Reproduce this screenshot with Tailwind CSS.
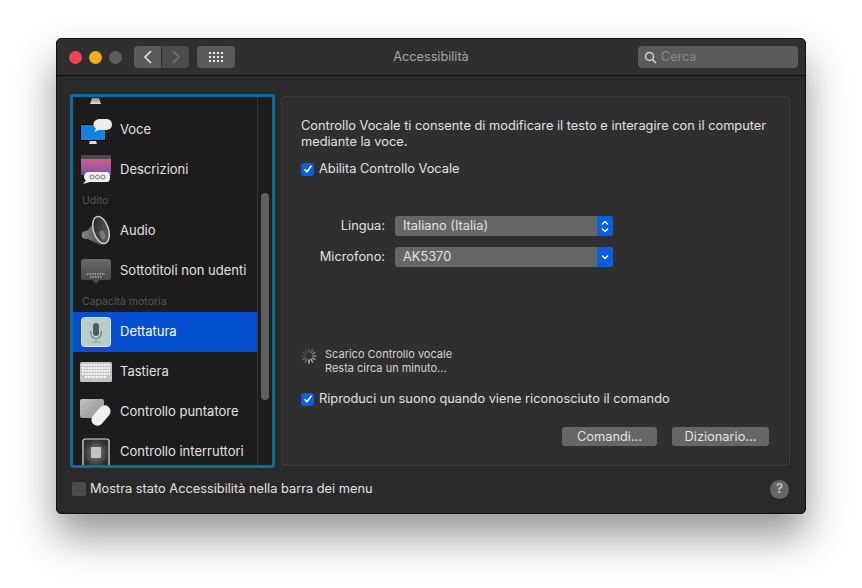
<!DOCTYPE html>
<html lang="it">
<head>
<meta charset="utf-8">
<title>Accessibilità</title>
<script src="https://cdn.jsdelivr.net/npm/@tailwindcss/browser@4"></script>
</head>
<body class="bg-white overflow-hidden font-['Inter','Liberation_Sans',sans-serif] text-[12.8px] text-[#e2e2e2]">
<div class="w-[862px] h-[588px] pt-[38px] pl-[56px]">
  <div class="w-[750px] h-[476px] rounded-[5px] bg-[#2a2a2a] border border-[#111] shadow-[0_22px_40px_rgba(0,0,0,0.42)] flex flex-col overflow-hidden">
    <!-- title bar -->
    <div class="h-[37px] shrink-0 bg-[#2f2f2f] border-b border-[#0c0c0c] flex items-center pl-[12px] pr-[7px]">
      <div class="flex items-center gap-[7px]">
        <span class="w-[13px] h-[13px] rounded-full bg-[#f5404f]"></span>
        <span class="w-[13px] h-[13px] rounded-full bg-[#f7ab1e]"></span>
        <span class="w-[13px] h-[13px] rounded-full bg-[#5e5e5e]"></span>
      </div>
      <div class="flex items-center gap-px ml-[12px]">
        <div class="w-[27px] h-[22px] rounded-l-[4px] bg-[#5b5b5b] flex items-center justify-center">
          <svg width="10" height="14" viewBox="0 0 10 14" fill="none" stroke="#eee" stroke-width="1.5"><path d="M8 1L2 7l6 6"/></svg>
        </div>
        <div class="w-[27px] h-[22px] rounded-r-[4px] bg-[#4c4c4c] flex items-center justify-center">
          <svg width="10" height="14" viewBox="0 0 10 14" fill="none" stroke="#737373" stroke-width="1.5"><path d="M2 1l6 6-6 6"/></svg>
        </div>
      </div>
      <div class="w-[38px] h-[22px] ml-[8px] rounded-[4px] bg-[#5b5b5b] flex items-center justify-center">
        <svg width="14" height="11" viewBox="0 0 14 11" fill="#f0f0f0">
          <rect x="0" y="0" width="2" height="2"/><rect x="4" y="0" width="2" height="2"/><rect x="8" y="0" width="2" height="2"/><rect x="12" y="0" width="2" height="2"/>
          <rect x="0" y="4" width="2" height="2"/><rect x="4" y="4" width="2" height="2"/><rect x="8" y="4" width="2" height="2"/><rect x="12" y="4" width="2" height="2"/>
          <rect x="0" y="8" width="2" height="2"/><rect x="4" y="8" width="2" height="2"/><rect x="8" y="8" width="2" height="2"/><rect x="12" y="8" width="2" height="2"/>
        </svg>
      </div>
      <div class="flex-1 text-center pr-[11px] text-[#a8a8a8] text-[12.7px]">Accessibilità</div>
      <div class="w-[160px] h-[22px] rounded-[4px] bg-[#5a5a5a] flex items-center pl-[6px] gap-[4px]">
        <svg width="13" height="13" viewBox="0 0 13 13" fill="none" stroke="#d8d8d8" stroke-width="1.5"><circle cx="5.5" cy="5.5" r="4"/><path d="M8.5 8.5l3.5 3.5"/></svg>
        <span class="text-[#8a8a8a] text-[12.5px]">Cerca</span>
      </div>
    </div>

    <!-- body -->
    <div class="flex-1 flex flex-col pl-[13px] pr-[15px] pt-[18px]">
      <div class="flex gap-[6px] items-start">
        <!-- sidebar -->
        <div class="w-[205px] h-[374px] shrink-0 rounded-[3px] border-[3px] border-[#0b6c9f] bg-[#1c1c1c] flex overflow-hidden text-[13px]">
          <div class="w-[184px] shrink-0 overflow-hidden">
            <div class="-mt-[27px]">
              <div class="h-[40px] flex items-center pl-[7px] gap-[9px]">
                <svg width="32" height="32" viewBox="0 0 32 32">
                  <defs><linearGradient id="st" x1="0" y1="0" x2="0" y2="1"><stop offset="0" stop-color="#8a8a8a"/><stop offset="1" stop-color="#e0e0e0"/></linearGradient></defs>
                  <path d="M12 24h7l2 6H10z" fill="url(#st)"/>
                </svg>
              </div>
              <div class="h-[40px] flex items-center pl-[7px] gap-[8px]">
                <svg width="32" height="32" viewBox="0 0 32 32">
                  <rect x="0.500" y="10.500" width="25" height="16" fill="#0d84e4" stroke="#050505"/>
                  <path d="M10 27h6l1 3H9z" fill="#e0e0e0"/>
                  <path d="M20 5h6c3.500 0 6 2.200 6 5.500S29.500 16 26 16h-7l-5 2 2-3.500c-1.500-1-2.500-2.300-2.500-4C13.500 7.200 16.500 5 20 5z" fill="#ececec"/>
                </svg>
                <span>Voce</span>
              </div>
              <div class="h-[40px] flex items-center pl-[7px] gap-[8px]">
                <svg width="32" height="32" viewBox="0 0 32 32">
                  <defs><linearGradient id="g1" x1="0" y1="0" x2="0" y2="1"><stop offset="0" stop-color="#c9608a"/><stop offset="0.550" stop-color="#a85a9a"/><stop offset="1" stop-color="#5d55a8"/></linearGradient></defs>
                  <rect x="1" y="1" width="30" height="4" fill="#4a4a4a"/>
                  <rect x="1" y="5" width="30" height="16" fill="url(#g1)"/>
                  <path d="M8 18h19c2 0 3 2 3 5s-1 5-3 5H10l-7 2 3-3.500c-1-1-2-2-2-3.500 0-3 2-5 4-5z" fill="#f0f0f0"/>
                  <circle cx="12" cy="23" r="2" fill="none" stroke="#777"/><circle cx="17.500" cy="23" r="2" fill="none" stroke="#777"/><circle cx="23" cy="23" r="2" fill="none" stroke="#777"/>
                </svg>
                <span>Descrizioni</span>
              </div>
              <div class="h-[21px] flex items-center pl-[9px] text-[10.5px] text-[#555]">Udito</div>
              <div class="h-[40px] flex items-center pl-[7px] gap-[8px]">
                <svg width="32" height="32" viewBox="0 0 32 32">
                  <defs>
                    <linearGradient id="sp" x1="0" y1="0" x2="1" y2="1"><stop offset="0" stop-color="#1f1f1f"/><stop offset="1" stop-color="#6a6a6a"/></linearGradient>
                    <linearGradient id="bk" x1="0" y1="0" x2="1" y2="0"><stop offset="0" stop-color="#8a8a8a"/><stop offset="1" stop-color="#383838"/></linearGradient>
                  </defs>
                  <path d="M3 17c1-1 4-1 5-2L19 2l8 26-7 2L8 24c-2 0-5 0-6-2-1-2 0-4 1-5z" fill="url(#bk)"/>
                  <ellipse cx="21" cy="15" rx="7.500" ry="14" fill="url(#sp)" stroke="#d0d0d0" stroke-width="1.500" transform="rotate(-17 21 15)"/>
                  <ellipse cx="22.500" cy="20" rx="2.500" ry="4.500" fill="#7a7a7a" transform="rotate(-17 22.500 20)"/>
                </svg>
                <span>Audio</span>
              </div>
              <div class="h-[40px] flex items-center pl-[7px] gap-[8px]">
                <svg width="32" height="32" viewBox="0 0 32 32">
                  <defs><linearGradient id="cc" x1="0" y1="0" x2="0" y2="1"><stop offset="0" stop-color="#6a6a6a"/><stop offset="1" stop-color="#444"/></linearGradient></defs>
                  <path d="M4 4h24c1.500 0 3 1 3 3v16c0 1-1 2-2 2H20l-4 4-4-4H3c-1 0-2-1-2-2V7c0-2 1.500-3 3-3z" fill="url(#cc)"/>
                  <path d="M7 19h18M10 22h12" stroke="#dcdcdc" stroke-dasharray="1.500 1"/>
                </svg>
                <span>Sottotitoli non udenti</span>
              </div>
              <div class="h-[21px] flex items-center pl-[9px] text-[10.5px] text-[#555]">Capacità motoria</div>
              <div class="h-[40px] flex items-center pl-[7px] gap-[8px] bg-[#0450d0] text-white">
                <svg width="32" height="32" viewBox="0 0 32 32">
                  <rect x="1.500" y="1.500" width="29" height="29" rx="3" fill="#b9cdc9" stroke="#dde6e4"/>
                  <rect x="13" y="7" width="6" height="13" rx="3" fill="#4c5d61"/>
                  <path d="M10.500 15c0 5 2 7.500 5.500 7.500s5.500-2.500 5.500-7.500" fill="none" stroke="#6f8084" stroke-width="1.200"/>
                  <path d="M16 22v4M12 26h8" stroke="#73b98a" stroke-width="1.200"/>
                </svg>
                <span>Dettatura</span>
              </div>
              <div class="h-[40px] flex items-center pl-[7px] gap-[8px]">
                <svg width="32" height="32" viewBox="0 0 32 32">
                  <rect x="0" y="6" width="32" height="20" rx="1.500" fill="#c4c4c4"/>
                  <path d="M2 9h28M2 12h28M2 15h28M2 18h28M5 21h22" stroke="#f6f6f6" stroke-width="1.800" stroke-dasharray="2 .7"/>
                </svg>
                <span>Tastiera</span>
              </div>
              <div class="h-[40px] flex items-center pl-[7px] gap-[8px]">
                <svg width="32" height="32" viewBox="0 0 32 32">
                  <defs><linearGradient id="tp" x1="0" y1="0" x2="1" y2="1"><stop offset="0" stop-color="#c0c0c0"/><stop offset="1" stop-color="#8f8f8f"/></linearGradient></defs>
                  <rect x="0" y="3" width="24" height="19" rx="2" fill="url(#tp)"/>
                  <rect x="15" y="8" width="12" height="23" rx="6" transform="rotate(40 21 19.500)" fill="#f0f0f0"/>
                </svg>
                <span>Controllo puntatore</span>
              </div>
              <div class="h-[40px] flex items-center pl-[7px] gap-[8px]">
                <svg width="32" height="32" viewBox="0 0 32 32">
                  <defs><radialGradient id="sw"><stop offset="0.300" stop-color="#6a6a6a"/><stop offset="1" stop-color="#2d2d2d"/></radialGradient></defs>
                  <rect x="3" y="3" width="26" height="28" rx="2" fill="url(#sw)" stroke="#e4e4e4" stroke-width="1.200"/>
                  <rect x="11" y="11" width="10" height="11" rx="1" fill="#c4c4c4"/>
                </svg>
                <span>Controllo interruttori</span>
              </div>
            </div>
          </div>
          <div class="flex-1 border-l border-[#333] pl-[3px] pt-[96px]">
            <div class="w-[8px] h-[207px] rounded-full bg-[#5f5f5f]"></div>
          </div>
        </div>

        <!-- panel -->
        <div class="w-[509px] h-[370px] mt-[2px] rounded-[4px] bg-[#2f2f2f] border border-[#3a3a3a] flex flex-col pl-[19px] pr-[20px] pt-[21px]">
          <p class="leading-[16px]">Controllo Vocale ti consente di modificare il testo e interagire con il computer<br>mediante la voce.</p>
          <label class="flex items-center gap-[5px] mt-[11px] h-[16px]">
            <span class="w-[13px] h-[13px] rounded-[3px] bg-[#0a5fe0] flex items-center justify-center">
              <svg width="10" height="10" viewBox="0 0 10 10" fill="none" stroke="#fff" stroke-width="1.600"><path d="M1.500 5.200l2.400 2.600 4.600-6"/></svg>
            </span>
            <span>Abilita Controllo Vocale</span>
          </label>
          <div class="grid grid-cols-[93px_218px] gap-x-[10px] gap-y-[11px] items-center mt-[39px] -ml-[9px] w-fit">
            <span class="text-right">Lingua:</span>
            <div class="h-[20px] rounded-[3px] bg-[#666] flex items-center pl-[8px] overflow-hidden">
              <span class="flex-1">Italiano (Italia)</span>
              <span class="w-[16px] h-full bg-[#0a5fe0] flex items-center justify-center">
                <svg width="8" height="13" viewBox="0 0 8 13" fill="none" stroke="#fff" stroke-width="1.300"><path d="M1 4.500l3-3 3 3M1 8.500l3 3 3-3"/></svg>
              </span>
            </div>
            <span class="text-right">Microfono:</span>
            <div class="h-[20px] rounded-[3px] bg-[#666] flex items-center pl-[8px] overflow-hidden">
              <span class="flex-1">AK5370</span>
              <span class="w-[16px] h-full bg-[#0a5fe0] flex items-center justify-center">
                <svg width="8" height="6" viewBox="0 0 8 6" fill="none" stroke="#fff" stroke-width="1.300"><path d="M1 1.500l3 3 3-3"/></svg>
              </span>
            </div>
          </div>
          <div class="flex items-start mt-[80px] gap-[8px] text-[11px] leading-[14px] text-[#d5d5d5]">
            <svg class="mt-px" width="16" height="16" viewBox="0 0 16 16" stroke-width="1.500" stroke-linecap="round">
              <path d="M8 1v3" stroke="#555"/><path d="M11.500 2l-1.500 2.600" stroke="#666"/><path d="M14 4.500l-2.600 1.500" stroke="#777"/><path d="M15 8h-3" stroke="#888"/><path d="M14 11.500l-2.600-1.500" stroke="#999"/><path d="M11.500 14l-1.500-2.600" stroke="#aaa"/><path d="M8 15v-3" stroke="#bbb"/><path d="M4.500 14l1.500-2.600" stroke="#777"/><path d="M2 11.500l2.600-1.500" stroke="#666"/><path d="M1 8h3" stroke="#555"/><path d="M2 4.500l2.600 1.500" stroke="#4d4d4d"/><path d="M4.500 2l1.500 2.600" stroke="#4a4a4a"/>
            </svg>
            <div>Scarico Controllo vocale<br>Resta circa un minuto...</div>
          </div>
          <label class="flex items-center gap-[5px] mt-[16px] h-[16px]">
            <span class="w-[13px] h-[13px] rounded-[3px] bg-[#0a5fe0] flex items-center justify-center">
              <svg width="10" height="10" viewBox="0 0 10 10" fill="none" stroke="#fff" stroke-width="1.600"><path d="M1.500 5.200l2.400 2.600 4.600-6"/></svg>
            </span>
            <span>Riproduci un suono quando viene riconosciuto il comando</span>
          </label>
          <div class="flex justify-end gap-[15px] mt-[20px]">
            <div class="w-[95px] h-[19px] rounded-[3px] bg-[#666] flex items-center justify-center">Comandi...</div>
            <div class="w-[97px] h-[19px] rounded-[3px] bg-[#666] flex items-center justify-center">Dizionario...</div>
          </div>
        </div>
      </div>

      <!-- bottom row -->
      <div class="flex items-center mt-[11px] h-[20px] pl-[2px]">
        <span class="w-[14px] h-[14px] rounded-[2px] bg-[#4c4c4c]"></span>
        <span class="ml-[4px] flex-1">Mostra stato Accessibilità nella barra dei menu</span>
        <span class="w-[19px] h-[19px] mr-px rounded-full bg-[#666] flex items-center justify-center text-[13px] font-semibold text-[#c8c8c8]">?</span>
      </div>
    </div>
  </div>
</div>
</body>
</html>
